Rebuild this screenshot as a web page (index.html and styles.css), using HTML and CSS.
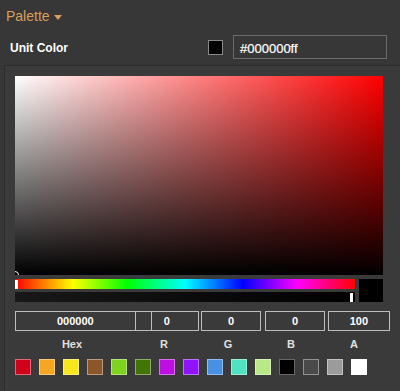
FILE: index.html
```html
<!DOCTYPE html>
<html lang="en">
<head>
    <meta charset="UTF-8">
    <title>Palette</title>
    <link rel="stylesheet" href="styles.css">
</head>
<body>

<div class="header">
    <span class="title">Palette</span>
    <svg class="caret" width="8" height="5" viewBox="0 0 8 5"><path d="M0 0h8L4 5z" fill="#d99e5a"/></svg>
</div>

<div class="row">
    <span class="row-label">Unit Color</span>
    <span class="current"></span>
    <div class="hex-input">#000000ff</div>
</div>

<div class="panel">
    <div class="saturation">
        <div class="handle"></div>
    </div>
    <div class="controls">
        <div class="sliders">
            <div class="hue"><div class="thumb hue-thumb"></div></div>
            <div class="alpha"><div class="thumb alpha-thumb"></div></div>
        </div>
        <div class="preview"></div>
    </div>
    <div class="fields">
        <div class="field hex">000000</div>
        <div class="field r"><span class="split"></span>0</div>
        <div class="field g">0</div>
        <div class="field b">0</div>
        <div class="field a">100</div>
    </div>
    <div class="labels">
        <span>Hex</span>
        <span>R</span>
        <span>G</span>
        <span>B</span>
        <span>A</span>
    </div>
    <div class="swatches">
        <span class="swatch" style="background:#d0021b"></span>
        <span class="swatch" style="background:#f5a623"></span>
        <span class="swatch" style="background:#f8e71c"></span>
        <span class="swatch" style="background:#8b572a"></span>
        <span class="swatch" style="background:#7ed321"></span>
        <span class="swatch" style="background:#417505"></span>
        <span class="swatch" style="background:#bd10e0"></span>
        <span class="swatch" style="background:#9013fe"></span>
        <span class="swatch" style="background:#4a90e2"></span>
        <span class="swatch" style="background:#50e3c2"></span>
        <span class="swatch" style="background:#b8e986"></span>
        <span class="swatch" style="background:#000000"></span>
        <span class="swatch" style="background:#4a4a4a"></span>
        <span class="swatch" style="background:#9b9b9b"></span>
        <span class="swatch" style="background:#ffffff"></span>
    </div>
</div>

</body>
</html>
```

FILE: styles.css
```css
body {
    margin: 0;
    width: 400px;
    height: 391px;
    overflow: hidden;
    background-color: #373737;
    font-family: "Liberation Sans", Arial, sans-serif;
    color: #fff;
}
.header {
    display: flex;
    align-items: center;
    height: 18px;
    padding: 7px 0 0 6px;
}
.title {
    font-size: 14px;
    color: #d99e5a;
}
.caret {
    margin-left: 4px;
    margin-top: 2px;
}
.row {
    display: flex;
    align-items: center;
    height: 24px;
    margin-top: 10px;
    padding-left: 10px;
}
.row-label {
    width: 198px;
    padding-top: 1px;
    font-size: 12px;
    font-weight: bold;
}
.current {
    width: 13px;
    height: 13px;
    background-color: #000;
    border: 1px solid #8a8a8a;
}
.hex-input {
    box-sizing: border-box;
    width: 154px;
    height: 24px;
    margin-left: 10px;
    padding: 5px 0 0 6px;
    border: 1px solid #6b6b6b;
    font-size: 13px;
    -webkit-text-stroke: 0.2px #fff;
}
.panel {
    box-sizing: border-box;
    height: 326px;
    margin: 6px 0 0 4px;
    padding: 10px 10px 0 10px;
    background-color: #3a3a3a;
    border-top: 1px solid #2e2e2e;
    border-left: 1px solid #2e2e2e;
}
.saturation {
    position: relative;
    width: 368px;
    height: 199px;
    overflow: hidden;
    background: linear-gradient(to top, #000, rgba(0, 0, 0, 0)),
                linear-gradient(to right, #fff, rgba(255, 255, 255, 0)),
                #f00;
}
.handle {
    position: absolute;
    left: -4px;
    bottom: -4px;
    width: 6px;
    height: 6px;
    border-radius: 50%;
    border: 1px solid #fff;
}
.controls {
    display: flex;
    margin-top: 4px;
}
.sliders {
    width: 340px;
}
.hue, .alpha {
    position: relative;
    height: 10px;
}
.hue {
    background: linear-gradient(to right, #f00 0%, #ff0 17%, #0f0 33%, #0ff 50%, #00f 67%, #f0f 83%, #f00 100%);
}
.alpha {
    margin-top: 3px;
    background: linear-gradient(to right, #181818, #000);
}
.thumb {
    position: absolute;
    top: 1px;
    width: 3px;
    height: 9px;
    background-color: #fff;
}
.hue-thumb {
    left: 0;
}
.alpha-thumb {
    right: 2px;
}
.preview {
    width: 24px;
    height: 23px;
    margin-left: 4px;
    background-color: #000;
}
.fields {
    display: flex;
    margin-top: 9px;
    height: 20px;
}
.field {
    position: relative;
    box-sizing: border-box;
    height: 20px;
    border: 1px solid #bdbdbd;
    font-size: 11px;
    font-weight: bold;
    line-height: 18px;
    text-align: center;
}
.hex {
    width: 122px;
}
.r {
    width: 64px;
    border-left: none;
}
.split {
    position: absolute;
    left: 15px;
    top: -1px;
    bottom: -1px;
    border-left: 1px solid #bdbdbd;
}
.g {
    width: 61px;
    margin-left: 2px;
}
.b {
    width: 60px;
    margin-left: 4px;
}
.a {
    width: 63px;
    margin-left: 3px;
}
.labels {
    display: grid;
    grid-template-columns: 114px 70px 58px 68px 58px;
    margin-top: 7px;
    font-size: 11px;
    font-weight: bold;
    color: #e0e0e0;
    text-align: center;
}
.swatches {
    display: flex;
    gap: 8px;
    margin-top: 9px;
}
.swatch {
    box-sizing: border-box;
    width: 16px;
    height: 16px;
    box-shadow: inset 0 0 0 1px rgba(255, 255, 255, 0.4);
}
```
